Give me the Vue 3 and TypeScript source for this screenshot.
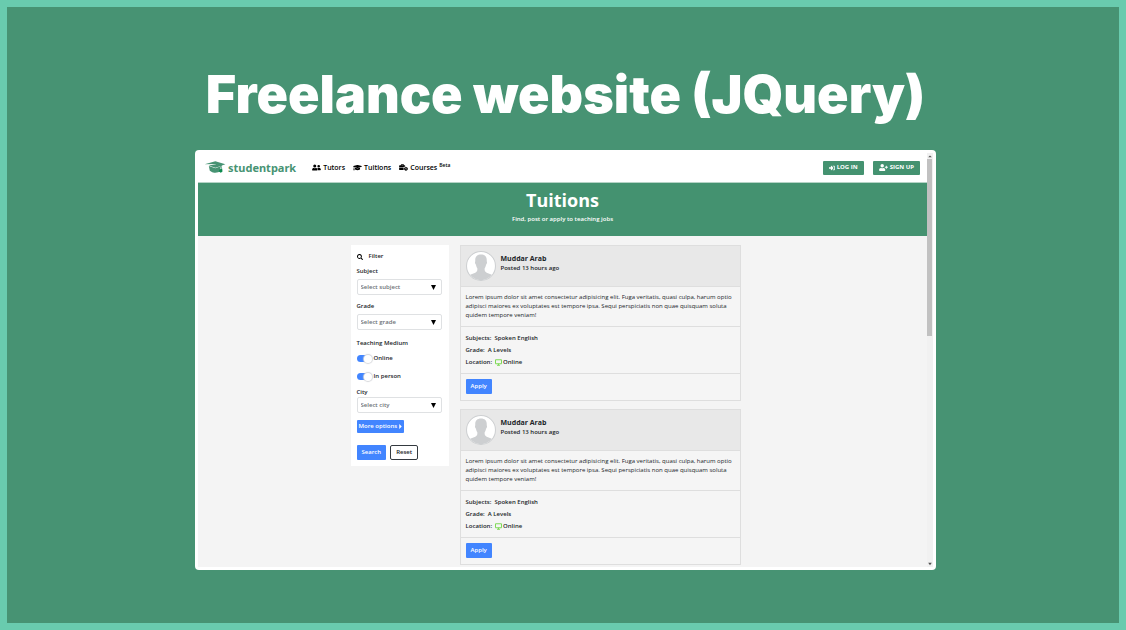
<script setup lang="ts">
import { ref } from 'vue'

interface Field {
  id: string
  label: string
  placeholder: string
  options: string[]
}

interface Tuition {
  id: number
  name: string
  posted: string
  body: string
  subjects: string
  grade: string
  location: string
}

const subject: Field = { id: 'subject', label: 'Subject', placeholder: 'Select subject', options: ['Spoken English', 'Maths'] }
const grade: Field = { id: 'grade', label: 'Grade', placeholder: 'Select grade', options: ['O Levels', 'A Levels'] }
const city: Field = { id: 'city', label: 'City', placeholder: 'Select city', options: ['Karachi', 'Lahore'] }

const chosen = ref<Record<string, string>>({ subject: '', grade: '', city: '' })
const online = ref(true)
const inPerson = ref(true)

const reset = () => {
  chosen.value = { subject: '', grade: '', city: '' }
  online.value = true
  inPerson.value = true
}

const tuitions: Tuition[] = [1, 2].map((id) => ({
  id,
  name: 'Muddar Arab',
  posted: 'Posted 13 hours ago',
  body: 'Lorem ipsum dolor sit amet consectetur adipisicing elit. Fuga veritatis, quasi culpa, harum optio adipisci maiores ex voluptates est tempore ipsa. Sequi perspiciatis non quae quisquam soluta quidem tempore veniam!',
  subjects: 'Spoken English',
  grade: 'A Levels',
  location: 'Online',
}))
</script>

<template>
  <main class="stage">
    <h1 class="headline">Freelance website (JQuery)</h1>

    <div class="window">
      <div class="page">
        <header class="navbar">
          <a class="brand" href="#">
            <svg class="brand-cap" viewBox="0 0 66 40" aria-hidden="true">
              <path d="M1 10 34 1l31 9-9 3-3 2 1 8-3 1-2-8-15 5L14 14l22-4-1-1z" />
              <path d="M14 15l20 7 15-5 1 14c-7 6-21 7-28 2l-5-3z" />
              <path class="tassel" d="M47 26l8-3 1 9-5 4-6-4z" />
            </svg>
            <span>studentpark</span>
          </a>
          <nav class="links">
            <a href="#">
              <svg class="i-wide" viewBox="0 0 640 512" aria-hidden="true"><path d="M192 256a112 112 0 1 0 0-224 112 112 0 0 0 0 224zm77 32h-8c-42 20-95 20-138 0h-8C51 288 0 339 0 403v29c0 27 22 48 48 48h288c27 0 48-21 48-48v-29c0-64-51-115-115-115zm211-32a96 96 0 1 0 0-192 96 96 0 0 0 0 192zm48 32h-4c-28 10-60 10-88 0h-4c-20 0-39 6-56 16 25 27 40 62 40 102v42h176c27 0 48-21 48-48 0-62-50-112-112-112z" /></svg>
              Tutors
            </a>
            <a href="#">
              <svg class="i-wide" viewBox="0 0 640 512" aria-hidden="true"><path d="M622 153 344 68c-16-5-32-5-48 0L18 153c-24 8-24 39 0 47l49 15c-11 13-18 29-18 47-10 6-17 16-17 28 0 11 6 20 14 26L20 430c-2 10 5 18 16 18h56c11 0 18-8 16-18L82 316c8-6 14-15 14-26 0-12-7-22-16-27 1-16 9-29 22-38l194 60c10 3 27 7 48 0l278-85c24-8 24-39 0-47zM353 315c-31 10-56 4-66 0l-145-44-14 113c0 35 86 64 192 64s192-29 192-64l-14-113z" /></svg>
              Tuitions
            </a>
            <a href="#">
              <svg class="i-wide" viewBox="0 0 640 512" aria-hidden="true"><path fill-rule="evenodd" d="M128 96V60c0-20 16-36 36-36h152c20 0 36 16 36 36v36h50c24 0 44 20 44 44v60c-30-10-70-10-100 0v24H0v-84c0-24 20-44 44-44zm48 0h128V72H176zM0 256h330v190H44c-24 0-44-20-44-44zm500-40c77 0 140 63 140 140s-63 140-140 140-140-63-140-140 63-140 140-140zm-24 60v100h90v-34h-54v-66z" /></svg>
              Courses <sup>Beta</sup>
            </a>
          </nav>
          <div class="auth">
            <button type="button">
              <svg class="i-sq" viewBox="0 0 512 512" aria-hidden="true"><path d="M416 448h-84c-7 0-12-5-12-12v-40c0-7 5-12 12-12h84c18 0 32-14 32-32V160c0-18-14-32-32-32h-84c-7 0-12-5-12-12V76c0-7 5-12 12-12h84c53 0 96 43 96 96v192c0 53-43 96-96 96zm-47-209L201 71c-15-15-41-4-41 17v96H24c-13 0-24 11-24 24v96c0 13 11 24 24 24h136v96c0 21 26 32 41 17l168-168c9-9 9-24 0-34z" /></svg>
              LOG IN
            </button>
            <button type="button">
              <svg class="i-wide" viewBox="0 0 640 512" aria-hidden="true"><path d="M624 208h-64v-64c0-9-7-16-16-16h-32c-9 0-16 7-16 16v64h-64c-9 0-16 7-16 16v32c0 9 7 16 16 16h64v64c0 9 7 16 16 16h32c9 0 16-7 16-16v-64h64c9 0 16-7 16-16v-32c0-9-7-16-16-16zm-400 48a128 128 0 1 0 0-256 128 128 0 0 0 0 256zm90 32h-17c-44 21-100 21-146 0h-17C60 288 0 348 0 422v42c0 27 22 48 48 48h352c27 0 48-21 48-48v-42c0-74-60-134-134-134z" /></svg>
              SIGN UP
            </button>
          </div>
        </header>

        <section class="hero">
          <h2>Tuitions</h2>
          <p>Find, post or apply to teaching jobs</p>
        </section>

        <div class="content">
          <form class="filter" @submit.prevent>
            <h3>
              <svg viewBox="0 0 512 512" aria-hidden="true"><path fill-rule="evenodd" d="M505 443 405 343c-4-5-11-7-17-7h-16a208 208 0 1 0-36 36v16c0 6 2 13 7 17l100 100c9 9 24 9 34 0l28-28c9-10 9-25 0-34zM208 336a128 128 0 1 1 0-256 128 128 0 0 1 0 256z" /></svg>
              Filter
            </h3>

            <div v-for="f in [subject, grade]" :key="f.id" class="field">
              <label :for="f.id">{{ f.label }}</label>
              <div class="select">
                <select :id="f.id" v-model="chosen[f.id]">
                  <option value="">{{ f.placeholder }}</option>
                  <option v-for="o in f.options" :key="o">{{ o }}</option>
                </select>
                <svg viewBox="0 0 5 5" aria-hidden="true"><path d="M0 0h5L2.500 5z" /></svg>
              </div>
            </div>

            <fieldset>
              <legend>Teaching Medium</legend>
              <label class="switch"><input v-model="online" type="checkbox" /><i></i>Online</label>
              <label class="switch"><input v-model="inPerson" type="checkbox" /><i></i>In person</label>
            </fieldset>

            <div class="field tight">
              <label :for="city.id">{{ city.label }}</label>
              <div class="select">
                <select :id="city.id" v-model="chosen[city.id]">
                  <option value="">{{ city.placeholder }}</option>
                  <option v-for="o in city.options" :key="o">{{ o }}</option>
                </select>
                <svg viewBox="0 0 5 5" aria-hidden="true"><path d="M0 0h5L2.500 5z" /></svg>
              </div>
            </div>

            <button type="button" class="more">
              More options
              <svg viewBox="0 0 3 6" aria-hidden="true"><path d="M0 0l3 3-3 3z" /></svg>
            </button>

            <div class="actions">
              <button type="submit" class="primary">Search</button>
              <button type="button" class="outline" @click="reset">Reset</button>
            </div>
          </form>

          <div class="list">
            <article v-for="t in tuitions" :key="t.id" class="card">
              <header>
                <svg class="avatar" viewBox="0 0 58 58" aria-hidden="true">
                  <circle cx="29" cy="29" r="28" class="disc" />
                  <path d="M29 7c8 0 12 5 11 13 1 1 1 4-1 6-1 4-2 6-3 8 0 4 0 6 4 8l10 4c-10 14-32 14-42 0l10-4c4-2 4-4 4-8-1-2-2-4-3-8-2-2-2-5-1-6C17 12 21 7 29 7z" class="person" />
                  <circle cx="29" cy="29" r="28" class="ring" />
                </svg>
                <div>
                  <h3>{{ t.name }}</h3>
                  <p>{{ t.posted }}</p>
                </div>
              </header>
              <p class="body">{{ t.body }}</p>
              <dl>
                <div><dt>Subjects:</dt><dd>{{ t.subjects }}</dd></div>
                <div><dt>Grade:</dt><dd>{{ t.grade }}</dd></div>
                <div>
                  <dt>Location:</dt>
                  <dd>
                    <svg viewBox="0 0 14 13" aria-hidden="true"><path d="M1 1h12v8H1zM7 9v3M4 12h6" /></svg>{{ t.location }}
                  </dd>
                </div>
              </dl>
              <footer><button type="button" class="primary">Apply</button></footer>
            </article>
          </div>
        </div>
      </div>

      <div class="scrollbar" aria-hidden="true">
        <svg viewBox="0 0 5 5"><path d="M1 3.500 2.500 2 4 3.500z" /></svg>
        <div class="track"><div class="thumb"></div></div>
        <svg class="down" viewBox="0 0 5 5"><path d="M1 1.500h3L2.500 3.500z" /></svg>
      </div>
    </div>
  </main>
</template>

<style>
body {
  margin: 0;
}
</style>

<style scoped>
* {
  box-sizing: border-box;
}
h1, h2, h3, p, dl, dd, fieldset {
  margin: 0;
}
button {
  font: inherit;
  border: 0;
  padding: 0;
  cursor: pointer;
}
a {
  color: inherit;
  text-decoration: none;
}
svg {
  display: block;
  flex: none;
  fill: currentColor;
}
.stage {
  display: flex;
  flex-direction: column;
  align-items: center;
  height: 100vh;
  min-height: 420px;
  padding: 48px 20px 53px 25px;
  border: 7px solid #69cbae;
  background: #479373;
}
.headline {
  margin-bottom: 15px;
  font: 900 52px/80px Inter, sans-serif;
  color: #fff;
  white-space: nowrap;
}
.window {
  display: flex;
  flex: 1;
  min-height: 0;
  width: 70%;
  max-width: 741px;
  padding: 3px;
  border-radius: 4px;
  background: #fff;
  font: 600 6px/9px "Open Sans", "Noto Sans", sans-serif;
  color: #212529;
}
.page {
  flex: 1;
  min-width: 0;
  overflow: hidden;
  background: #f4f4f4;
}
.navbar {
  display: flex;
  align-items: center;
  height: 30px;
  padding: 0 7px 0 6px;
  border-bottom: 1px solid #b5d3c6;
  background: #fff;
}
.brand {
  display: flex;
  align-items: center;
  gap: 2px;
  margin-right: 16px;
  font: 700 11px/16px "Noto Sans", sans-serif;
  color: #479373;
}
.brand-cap {
  width: 22px;
  height: 13px;
}
.tassel {
  fill: #0b8a4e;
}
.links {
  display: flex;
  gap: 8px;
  font-size: 7px;
  color: #000;
}
.links a,
.auth button {
  display: flex;
  align-items: center;
  gap: 2px;
}
.links sup {
  align-self: flex-start;
  margin-top: -2px;
  font-size: 5px;
  line-height: 8px;
}
.i-wide {
  width: 9px;
  height: 7px;
}
.i-sq {
  width: 6px;
  height: 6px;
}
.auth {
  display: flex;
  gap: 9px;
  margin-left: auto;
}
.auth button {
  height: 14px;
  padding: 0 6px;
  border-radius: 1px;
  background: #449270;
  font-weight: 700;
  color: #fff;
}
.hero {
  height: 53px;
  padding-top: 6px;
  background: #449270;
  text-align: center;
  color: #fff;
}
.hero h2 {
  font: 700 18px/22px "Open Sans", sans-serif;
}
.hero p {
  margin-top: 4px;
}
.content {
  display: flex;
  align-items: flex-start;
  justify-content: center;
  gap: 11px;
  padding: 9px 70px 0 36px;
}
.filter {
  width: 98px;
  padding: 7px 7px 6px 6px;
  background: #fff;
}
.filter h3 {
  display: flex;
  align-items: center;
  gap: 6px;
  margin-bottom: 6px;
  font: inherit;
}
.filter h3 svg {
  width: 6px;
  height: 6px;
  color: #000;
}
.field {
  display: flex;
  flex-direction: column;
  gap: 3px;
  margin-bottom: 7px;
}
.field.tight {
  gap: 0;
}
.select {
  display: flex;
  align-items: center;
  height: 16px;
  padding: 0 5px 0 3px;
  border: 1px solid #dfe1e3;
  border-radius: 2px;
}
.select select {
  flex: 1;
  min-width: 0;
  height: 14px;
  padding: 0;
  border: 0;
  appearance: none;
  background: none;
  font: inherit;
  color: #6d7176;
}
.select svg {
  width: 5px;
  height: 5px;
  color: #000;
}
fieldset {
  padding: 0;
  border: 0;
  margin-top: 9px;
}
legend {
  padding: 0;
  margin-bottom: 6px;
}
.switch {
  display: flex;
  align-items: center;
  gap: 2px;
  height: 9px;
  margin-bottom: 9px;
}
.switch:last-child {
  margin-bottom: 7px;
}
.switch input {
  position: absolute;
  opacity: 0;
}
.switch i {
  display: flex;
  align-items: center;
  width: 15px;
  height: 7px;
  border-radius: 4px;
  background: #ccc;
}
.switch i::after {
  content: "";
  width: 8px;
  height: 8px;
  border-radius: 50%;
  background: #fff;
  box-shadow: 0 0 1px 1px #d5d7da;
}
.switch input:checked + i {
  justify-content: flex-end;
  background: #4285ff;
}
.more {
  display: flex;
  align-items: center;
  gap: 2px;
  height: 13px;
  padding: 0 2px;
  border-radius: 1px;
  background: #4285ff;
  font-weight: 600;
  color: #fff;
  white-space: nowrap;
}
.more svg {
  width: 3px;
  height: 5px;
}
.actions {
  display: flex;
  gap: 4px;
  margin-top: 12px;
}
.primary {
  height: 15px;
  padding: 0 5px;
  border-radius: 1px;
  background: #4285ff;
  font-weight: 600;
  color: #fff;
}
.outline {
  height: 15px;
  padding: 0 5px;
  border: 1px solid #343a40;
  border-radius: 2px;
  background: #fff;
  color: #212529;
}
.list {
  flex: 0 1 281px;
  display: grid;
  gap: 8px;
}
.card {
  border: 1px solid #dedede;
  background: #f5f5f5;
}
.card header {
  display: flex;
  gap: 5px;
  height: 41px;
  padding: 5px 5px 0;
  border-bottom: 1px solid #dedede;
  background: #e8e8e8;
}
.avatar {
  width: 30px;
  height: 30px;
}
.disc {
  fill: #fff;
}
.person {
  fill: #cdcfd1;
}
.ring {
  fill: none;
  stroke: #cdcfd1;
  stroke-width: 2;
}
.card h3 {
  margin-top: 3px;
  font: 700 7px/10px "Open Sans", sans-serif;
}
.body {
  height: 40px;
  padding: 6px 0 0 5px;
  border-bottom: 1px solid #dedede;
  font-weight: 500;
}
dl {
  display: grid;
  gap: 3px;
  padding: 7px 5px 6px;
  border-bottom: 1px solid #dedede;
}
dl div,
dd {
  display: flex;
  align-items: center;
}
dl div {
  gap: 3px;
}
dd svg {
  width: 7px;
  height: 7px;
  margin-right: 1px;
  fill: none;
  stroke: #7ed957;
  stroke-width: 2;
}
.card footer {
  padding: 5px 5px 6px;
}
.scrollbar {
  display: flex;
  flex-direction: column;
  width: 6px;
  background: #f1f1f1;
  color: #505050;
}
.scrollbar svg {
  width: 6px;
  height: 6px;
}
.track {
  flex: 1;
}
.thumb {
  height: 44%;
  margin: 0 1px 0 0;
  background: #c1c1c1;
}
</style>
